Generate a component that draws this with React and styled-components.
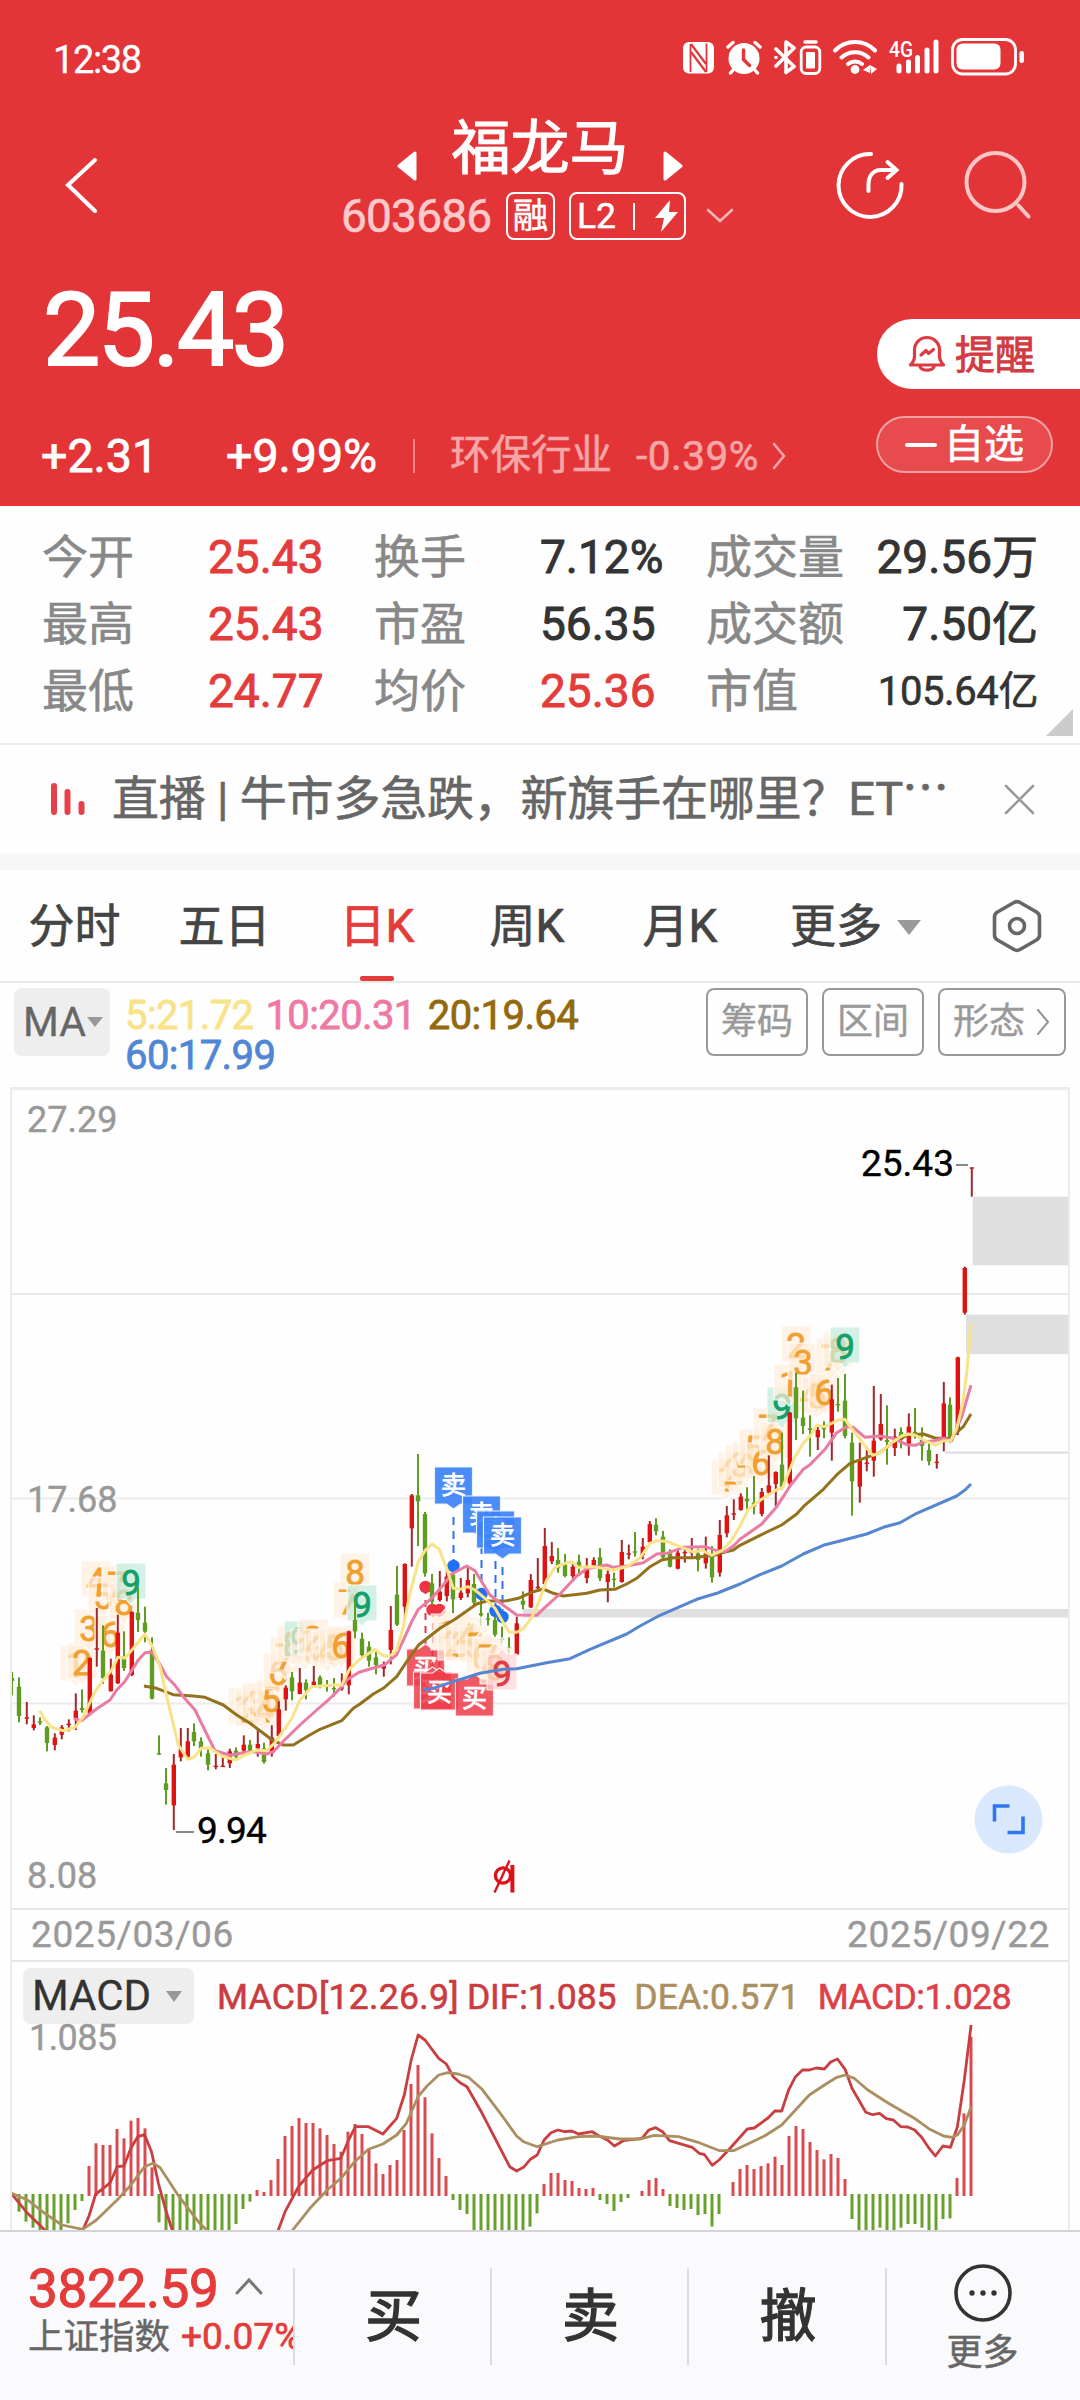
import React from "react";
import styled, { createGlobalStyle } from "styled-components";

const RED = "#e33538";
const UP = "#e43c3b";

const GlobalStyle = createGlobalStyle`
  * { box-sizing: border-box; }
  body { margin: 0; background: #fefefe; }
`;

const Screen = styled.main`
  width: 1080px;
  height: 2400px;
  display: flex;
  flex-direction: column;
  overflow: hidden;
  background: #fefefe;
  color: #333;
  font-family: Roboto, "Noto Sans CJK SC", sans-serif;
  white-space: nowrap;
  svg { display: block; flex: none; }
`;

/* ---------- header ---------- */
const Header = styled.header`
  height: 506px;
  background: ${RED};
  color: #fff;
`;
const StatusBar = styled.div`
  height: 115px;
  padding: 0 55px 0 53px;
  display: flex;
  align-items: center;
  justify-content: space-between;
`;
const Clock = styled.span`
  font-size: 38px;
  letter-spacing: -1.4px;
  padding-top: 4px;
  -webkit-text-stroke: 0.3px #fff;
`;
const StatusIcons = styled.div`
  display: flex;
  align-items: center;
`;
const Nav = styled.div`
  height: 135px;
  display: grid;
  grid-template-columns: 320px 440px 320px;
`;
const BackSlot = styled.div`
  padding: 42px 0 0 63px;
`;
const TitleRow = styled.div`
  height: 66px;
  display: flex;
  justify-content: center;
  align-items: flex-end;
  gap: 34px;
`;
const Title = styled.h1`
  margin: 0;
  align-self: flex-start;
  font-size: 59px;
  line-height: 67px;
  font-weight: 400;
  -webkit-text-stroke: 1.2px #fff;
`;
const CodeRow = styled.div`
  height: 48px;
  margin-top: 11px;
  display: flex;
  align-items: center;
  padding-left: 21px;
`;
const Code = styled.span`
  width: 165px;
  font-size: 46px;
  letter-spacing: -0.8px;
  color: #fdc9ca;
  -webkit-text-stroke: 0.6px #fdc9ca;
`;
const Badge = styled.span`
  height: 48px;
  width: ${(p) => p.$w}px;
  margin-right: ${(p) => p.$gap}px;
  border: 2px solid #fff;
  border-radius: 8px;
  display: flex;
  align-items: center;
  justify-content: center;
  font-size: 35.5px;
  line-height: 43px;
  -webkit-text-stroke: 0.5px #fff;
`;
const BadgeRule = styled.i`
  width: 2px;
  height: 27px;
  margin: 0 20px 0 17px;
  background: #fff;
`;
const NavActions = styled.div`
  display: flex;
  gap: 54px;
  padding: 34px 0 0 74px;
`;
const Quote = styled.div`
  height: 256px;
  display: flex;
  justify-content: space-between;
`;
const Price = styled.div`
  height: 156px;
  line-height: 160px;
  padding-left: 43px;
  font-size: 102px;
  font-weight: 400;
  letter-spacing: -2.5px;
  -webkit-text-stroke: 2px #fff;
`;
const ChangeRow = styled.div`
  height: 100px;
  display: flex;
  align-items: center;
  padding-left: 41px;
`;
const Change = styled.span`
  width: ${(p) => p.$w}px;
  font-size: 46.5px;
  -webkit-text-stroke: 0.8px #fff;
`;
const Sector = styled.div`
  display: flex;
  align-items: center;
  padding-left: 35px;
  border-left: 2px solid #ef8586;
  height: 34px;
  font-size: 40.5px;
  color: #f5a6a7;
  -webkit-text-stroke: 0.6px #f5a6a7;
`;
const SectorName = styled.span`
  margin: -9px 24px 0 0;
`;
const SectorChange = styled.span`
  margin-right: 12px;
  letter-spacing: 0.5px;
`;
const QuoteActions = styled.div`
  width: 204px;
  padding-top: 69px;
`;
const AlertButton = styled.button`
  width: 203px;
  margin-left: 1px;
  height: 70px;
  padding: 0 0 0 31px;
  border: 0;
  border-radius: 35px 0 0 35px;
  background: #fff;
  color: #d23b3f;
  font: 40px Roboto, "Noto Sans CJK SC", sans-serif;
  -webkit-text-stroke: 0.8px #d23b3f;
  display: flex;
  align-items: center;
  gap: 9px;
  span { margin-top: -5px; }
`;
const FavButton = styled.button`
  width: 177px;
  height: 57px;
  margin-top: 27px;
  padding: 0 0 8px 0;
  border: 2px solid #f2a0a1;
  border-radius: 29px;
  background: #e74b4d;
  color: #fff;
  font: 40px Roboto, "Noto Sans CJK SC", sans-serif;
  -webkit-text-stroke: 0.7px #fff;
  display: flex;
  align-items: center;
  justify-content: center;
  gap: 7px;
  i { width: 32px; height: 4px; margin-top: 9px; border-radius: 2px; background: #fff; }
`;

/* ---------- statistics ---------- */
const Stats = styled.section`
  height: 239px;
  border-bottom: 2px solid #ececec;
  position: relative;
  padding: 18px 42px 0;
`;
const StatGrid = styled.div`
  display: grid;
  grid-template-columns: 166px 166px 166px 166px 1fr;
  grid-auto-rows: 67px;
  align-items: center;
`;
const StatLabel = styled.span`
  font-size: 46px;
  line-height: 67px;
  color: #888;
  -webkit-text-stroke: 0.6px #888;
`;
const StatValue = styled.span`
  font-size: ${(p) => (p.$small ? 40 : 46)}px;
  line-height: 67px;
  letter-spacing: ${(p) => (p.$small ? -0.4 : 0)}px;
  color: ${(p) => (p.$up ? UP : "#333")};
  -webkit-text-stroke: ${(p) => (p.$small ? 0.6 : 0.9)}px currentColor;
`;
const LastCell = styled.div`
  display: flex;
  justify-content: space-between;
`;
const Fold = styled.i`
  position: absolute;
  right: 7px;
  bottom: 7px;
  border-style: solid;
  border-width: 0 0 27px 27px;
  border-color: transparent transparent #ccc transparent;
`;

/* ---------- news ---------- */
const News = styled.section`
  height: 108px;
  display: flex;
  align-items: center;
  padding: 0 45px 0 51px;
`;
const Headline = styled.div`
  flex: 1;
  margin-left: 27px;
  display: flex;
  font-size: 47px;
  line-height: 60px;
  letter-spacing: -0.2px;
  color: #666;
  -webkit-text-stroke: 0.6px #666;
`;
const Ellipsis = styled.span`
  margin: -14px 0 0 -1px;
  font-family: "Noto Sans CJK SC", sans-serif;
`;
const Band = styled.div`
  height: 17px;
  background: #f7f7f7;
`;

/* ---------- tabs ---------- */
const Tabs = styled.nav`
  height: 113px;
  border-bottom: 2px solid #e8e8e8;
  display: grid;
  grid-template-columns: 149px 151px 154px 146px 160px 232px 1fr;
  align-items: center;
`;
const Tab = styled.div`
  height: 111px;
  font-size: 46px;
  line-height: 112px;
  color: ${(p) => (p.$on ? UP : "#444")};
  -webkit-text-stroke: 0.7px currentColor;
  display: flex;
  flex-direction: column;
  align-items: center;
  &::after {
    content: "";
    margin-top: -6px;
    width: 34px;
    height: 5px;
    border-radius: 2px;
    background: ${(p) => (p.$on ? UP : "transparent")};
  }
`;
const MoreTab = styled.div`
  height: 111px;
  display: flex;
  align-items: center;
  padding-left: 30px;
  gap: 15px;
  font-size: 46px;
  line-height: 112px;
  color: #444;
  -webkit-text-stroke: 0.7px #444;
`;
const Caret = styled.i`
  width: 0;
  height: 0;
  border-style: solid;
  border-width: ${(p) => p.$h}px ${(p) => p.$w / 2}px 0;
  border-color: #999 transparent transparent;
  margin-top: ${(p) => p.$drop || 0}px;
`;

/* ---------- moving averages ---------- */
const MaRow = styled.section`
  height: 104px;
  display: flex;
  align-items: flex-start;
  padding: 5px 14px 0;
`;
const IndicatorChip = styled.div`
  display: flex;
  align-items: center;
  background: #eee;
  border-radius: 8px;
  width: ${(p) => p.$w}px;
  height: ${(p) => p.$h}px;
  padding-left: 9px;
  gap: ${(p) => p.$gap}px;
  font-size: ${(p) => p.$size}px;
  line-height: ${(p) => p.$h - 2}px;
  color: ${(p) => p.$color};
  -webkit-text-stroke: 0.3px currentColor;
`;
const MaValues = styled.div`
  width: 580px;
  margin-left: 15px;
  padding-top: 8px;
  display: flex;
  flex-wrap: wrap;
  column-gap: 12px;
`;
const MaValue = styled.span`
  font-size: 40px;
  line-height: 40px;
  letter-spacing: -0.6px;
  -webkit-text-stroke: 0.8px currentColor;
  color: ${(p) => p.$c};
`;
const ToolButton = styled.button`
  width: ${(p) => p.$w}px;
  height: 68px;
  margin-left: ${(p) => p.$ml || 0}px;
  padding: 0;
  border: 2px solid #999;
  border-radius: 8px;
  background: transparent;
  color: #999;
  font: 36px Roboto, "Noto Sans CJK SC", sans-serif;
  line-height: 60px;
  display: flex;
  align-items: center;
  justify-content: center;
  gap: 10px;
  -webkit-text-stroke: 0.4px #999;
`;

/* ---------- charts ---------- */
const ChartFrame = styled.section`
  width: 1060px;
  height: 1143px;
  margin-left: 10px;
  border: 2px solid #ececec;
  border-top-width: 3px;
  border-bottom: 0;
  overflow: hidden;
`;
const ChartSvg = styled.svg`
  width: 1056px;
  height: ${(p) => p.$h}px;
  overflow: visible;
  font-family: Roboto, "Noto Sans CJK SC", sans-serif;
`;
const Dates = styled.div`
  height: 54px;
  border-top: 2px solid #e6e6e6;
  border-bottom: 2px solid #e6e6e6;
  display: flex;
  align-items: center;
  justify-content: space-between;
  padding: 0 18px 1px 19px;
  font-size: 37px;
  letter-spacing: 0.6px;
  color: #999;
  -webkit-text-stroke: 0.4px #999;
`;
const MacdHead = styled.div`
  height: 62px;
  display: flex;
  align-items: flex-end;
  padding-left: 11px;
`;
const MacdText = styled.span`
  font-size: 35.5px;
  line-height: 54px;
  letter-spacing: ${(p) => p.$ls}px;
  margin-left: ${(p) => p.$ml}px;
  color: ${(p) => p.$c};
  -webkit-text-stroke: 0.6px currentColor;
`;

/* ---------- bottom bar ---------- */
const BottomBar = styled.footer`
  height: 170px;
  border-top: 2px solid #d4d4d6;
  background: #fafafc;
  display: grid;
  grid-template-columns: 295px 197px 197px 198px 193px;
  padding-top: 36px;
`;
const BarCell = styled.div`
  height: 97px;
  border-right: ${(p) => (p.$last ? 0 : 2)}px solid #dcdcde;
  overflow-x: ${(p) => (p.$last ? "visible" : "clip")};
  overflow-y: visible;
`;
const Action = styled(BarCell)`
  text-align: center;
  padding-left: 2px;
  font-size: 57px;
  line-height: 97px;
  -webkit-text-stroke: 1.3px #333;
`;
const IndexLine = styled.div`
  display: flex;
  align-items: center;
  height: 42px;
  padding-left: 28px;
  gap: 16px;
  font-size: 53px;
  letter-spacing: -0.3px;
  color: ${UP};
  -webkit-text-stroke: 1.1px ${UP};
  svg { margin-top: -6px; }
`;
const IndexName = styled.div`
  display: flex;
  align-items: center;
  height: 54px;
  padding-left: 28px;
  gap: 11px;
  font-size: 35.5px;
  line-height: 54px;
  color: #666;
  -webkit-text-stroke: 0.4px #666;
  span { color: ${UP}; font-size: 37px; -webkit-text-stroke: 0.7px ${UP}; }
`;
const MoreCell = styled(BarCell)`
  display: flex;
  flex-direction: column;
  align-items: center;
  padding-right: 2px;
  font-size: 36px;
  line-height: 60px;
  color: #666;
  -webkit-text-stroke: 0.5px #666;
  svg { margin-top: -5px; }
`;

/* ---------- data ---------- */
const xAt = (i) => 12 + 7 * i;

// Rows are [rising, high, low, body top, body bottom], thirds of a pixel below `base`.
const CANDLE_BLOCKS = [
  { base: 1500, rows: [
    [0,516,586,534,543],[0,532,667,560,648],[1,606,673,652,656],[1,646,691,673,684],[0,652,675,664,667],
    [0,678,754,682,729],[1,700,751,713,735],[1,675,718,682,704],[1,658,694,671,676],[1,580,690,632,658],
    [0,568,638,624,630],[1,472,640,474,640],[1,324,500,445,449],[0,376,552,452,534],[1,476,574,524,574],
    [1,344,552,398,550],[0,394,513,470,504],[1,334,528,336,525],[0,262,396,338,360],[0,320,427,368,395],
    [0,412,598,450,596],[0,706,764,760,764],[0,804,914,850,870],[1,762,990,794,916],[1,684,784,748,772],
    [1,684,774,724,770],[0,670,738,696,724],[0,712,770,724,745],[0,748,811,760,794],[1,762,808,797,801],
    [1,770,800,797,801],[1,746,804,754,790],[0,742,774,752,770],[1,706,758,734,752],[0,720,758,734,752],
    [1,690,770,732,745],[0,728,791,745,786],[1,676,770,712,760],[1,604,710,628,708],[1,556,632,563,598],
    [0,516,601,532,574],[1,504,583,548,582],[0,538,598,548,570],[1,498,560,545,556],[0,526,565,532,560],
    [0,540,575,555,559],[0,534,590,564,568],[1,520,572,562,566],[1,392,583,394,556],[0,300,415,360,394],
  ] },
  { base: 1420, rows: [
    [0,638,712,656,705],[0,664,740,680,722],[0,690,763,712,735],[1,725,770,738,746],[1,558,733,630,690],
    [0,438,618,524,614],[1,430,604,432,560],[1,222,440,226,325],[0,102,378,226,244],[0,276,470,282,460],
    [0,462,555,490,545],[1,453,545,515,540],[1,452,544,470,528],[0,440,580,464,538],[1,474,540,518,534],
    [1,442,532,480,520],[0,462,560,492,548],[0,510,620,580,586],[0,578,618,595,599],[0,588,654,600,644],
    [0,620,670,655,660],[0,652,710,682,686],[1,590,706,610,704],[0,514,568,542,554],[1,462,564,480,562],
    [1,414,508,500,504],[1,324,492,378,492],[1,366,432,408,424],[0,384,458,420,445],[0,402,472,430,468],
    [1,430,475,440,468],[0,404,468,425,442],[1,414,490,444,474],[1,412,444,420,436],[0,384,483,412,475],
    [1,444,547,462,486],[0,458,502,476,480],[1,360,488,396,486],[1,374,418,400,404],[0,336,410,394,398],
    [1,354,418,380,405],[1,303,372,312,366],[0,295,346,314,334],[0,333,422,350,412],[0,388,442,400,440],
    [1,390,448,398,446],[1,380,428,396,400],[1,354,410,395,399],[0,386,454,400,420],[1,350,446,400,430],
    [0,378,488,406,472],[1,300,470,345,458],
  ] },
  { base: 1120, rows: [
    [1,1158,1252,1186,1240],[1,1138,1200,1180,1184],[1,1120,1172,1130,1170],[0,1102,1168,1136,1144],
    [0,1068,1183,1148,1160],[1,1104,1189,1116,1182],[1,1006,1128,1096,1118],[1,1054,1158,1056,1092],
    [0,938,1108,1034,1104],[1,876,1104,878,1090],[0,758,960,802,895],[0,812,942,893,918],[0,886,1010,925,930],
    [1,918,990,930,952],[0,904,955,918,928],[1,794,1022,838,938],[0,774,875,852,856],[0,762,955,842,948],
    [0,938,1187,968,1084],[1,968,1148,1020,1100],[1,980,1054,1028,1032],[1,798,1070,962,1022],[1,822,962,912,958],
    [0,856,1034,960,966],[1,926,1008,950,984],[0,922,985,936,960],[1,880,1007,920,972],[0,864,956,935,945],
    [0,922,1022,958,978],[0,968,1036,990,1024],[1,1002,1046,1025,1029],[1,786,994,850,962],[0,832,968,854,950],
    [1,710,945,712,930],[1,440,584,444,578],[1,142,230,142,145],
  ] },
];
const CANDLES = CANDLE_BLOCKS.flatMap(({ base, rows }) =>
  rows.map(([up, ...ys]) => [up, ...ys.map((v) => base + v / 3)])
);

// Line points, thirds of a pixel from each block's origin.
const ORIGINS = [[0, 1500], [360, 1420], [680, 1120]];
const toPoints = (blocks) =>
  blocks
    .flatMap((pts, b) => pts.map(([x, y]) => `${(ORIGINS[b][0] + x / 3).toFixed(1)},${(ORIGINS[b][1] + y / 3).toFixed(1)}`))
    .join(" ");

const AVERAGES = [
  { color: "#5586cf", blocks: [[],
    [[190,810],[220,805],[270,788],[360,760],[430,748],[470,746],[560,728],[630,716],[690,688],[800,642],[840,618],[900,586],[960,560],[1010,538],[1070,520]],
    [[120,1416],[180,1392],[240,1364],[305,1338],[370,1302],[430,1276],[500,1258],[560,1242],[610,1222],[660,1208],[710,1180],[830,1128],[855,1110],[873,1092]]] },
  { color: "#94711c", blocks: [
    [[432,558],[470,565],[520,584],[580,588],[615,592],[670,615],[710,645],[750,670],[780,692],[820,722],[850,735],[880,735],[920,710],[960,688],[1025,662],[1060,625]],
    [[0,852],[40,822],[70,805],[110,770],[140,725],[175,676],[240,625],[285,598],[350,552],[380,543],[440,542],[475,535],[520,515],[550,507],[580,520],[610,528],[680,520],[720,510],[765,508],[800,492],[830,475],[870,440],[905,420],[940,413],[1000,413],[1070,404]],
    [[120,1300],[160,1290],[180,1276],[240,1246],[305,1215],[350,1182],[370,1160],[430,1108],[475,1060],[510,1030],[560,1012],[600,998],[640,966],[685,945],[730,942],[765,954],[810,955],[850,920],[873,882]]] },
  { color: "#ea7ba3", blocks: [
    [[222,656],[245,662],[285,630],[330,600],[350,570],[375,544],[415,480],[435,458],[455,456],[478,490],[500,530],[525,556],[550,590],[585,630],[620,702],[645,752],[690,766],[730,758],[760,755],[800,762],[820,755],[850,724],[900,675],[950,630],[985,600],[1020,566],[1040,540],[1075,518]],
    [[0,756],[40,744],[75,734],[110,704],[135,650],[155,605],[175,568],[215,535],[250,495],[275,462],[320,438],[345,452],[365,485],[390,525],[430,556],[470,585],[530,586],[555,562],[600,522],[650,468],[680,446],[740,435],[760,442],[800,438],[850,428],[890,402],[920,400],[970,382],[1030,380]],
    [[75,1280],[110,1292],[135,1295],[160,1278],[180,1258],[245,1212],[290,1160],[310,1130],[330,1098],[370,1048],[390,1034],[435,988],[470,938],[500,920],[520,922],[555,952],[600,948],[640,955],[680,974],[705,976],[735,965],[765,962],[790,955],[815,962],[845,890],[873,796]]] },
  { color: "#f8e388", blocks: [
    [[119,632],[135,660],[155,682],[190,692],[225,682],[250,650],[285,575],[310,540],[335,510],[353,472],[375,474],[400,445],[435,402],[458,440],[480,500],[500,590],[535,735],[563,778],[582,772],[605,744],[630,744],[665,768],[707,780],[735,765],[770,750],[800,752],[825,728],[875,656],[900,600],[935,560],[1000,555],[1025,555],[1050,505],[1075,482]],
    [[0,718],[45,688],[70,708],[90,708],[110,690],[130,620],[150,520],[175,425],[195,392],[216,372],[238,388],[258,440],[280,505],[300,508],[323,500],[345,510],[375,535],[405,565],[425,600],[447,636],[470,637],[490,626],[515,592],[535,550],[560,480],[585,442],[610,432],[635,425],[655,442],[700,440],[760,450],[800,440],[840,414],[870,370],[890,362],[920,364],[960,380],[1000,396],[1030,390]],
    [[75,1296],[95,1306],[125,1292],[155,1260],[180,1218],[205,1168],[245,1138],[285,1112],[308,1102],[325,1060],[345,1010],[370,970],[395,942],[410,916],[435,920],[475,900],[495,898],[515,926],[545,964],[560,985],[578,1006],[600,998],[640,965],[665,948],[685,942],[705,945],[735,962],[768,976],[790,962],[812,962],[830,925],[848,850],[860,760],[873,612]]] },
];

// Countdown runs: first candle index and the top of each successive tag.
const RUNS = [
  { start: 9, tops: [1645, 1643, 1609, 1561, 1577, 1615, 1565, 1583, 1563] },
  { start: 33, tops: [1688, 1690, 1683, 1690, 1680, 1653, 1637, 1625, 1621] },
  { start: 42, tops: [1629, 1619, 1629, 1631, 1628, 1626, 1582, 1553, 1585] },
  { start: 102, tops: [1459, 1452, 1445, 1441, 1429, 1443, 1408, 1422, 1387] },
  { start: 111, tops: [1364, 1326, 1343, 1375, 1377, 1373, 1338, 1331, 1327] },
];
const LOW_RUN = { start: 62, tops: [1614, 1624, 1625, 1617, 1626, 1637, 1638, 1648, 1654] };

const SELLS = [[453.5, 1467, 1566], [481.5, 1496, 1594], [495.5, 1511, 1611], [502.5, 1517, 1617]];
const BUYS = [[425.5, 1649, 1587], [432.5, 1672, 1610], [439.5, 1673, 1610], [474.5, 1679, 0]];

// Histogram ends, thirds of a pixel below 1880; values over 945 fall under the zero line.
const MACD_BARS = [
  948,995,1025,1043,1060,1060,1060,1060,1030,990,963,858,790,795,795,747,775,722,714,745,862,1027,
  1060,1060,1060,1060,1060,1060,1060,1060,1060,1060,1032,987,965,930,936,900,837,768,738,714,729,729,745,765,
  792,815,755,732,762,808,850,882,855,840,750,612,555,652,760,834,888,960,990,1002,1060,1060,1060,1060,1060,
  1060,1060,1060,1040,1000,912,879,879,900,903,924,927,924,960,972,993,966,954,945,933,900,894,927,978,984,990,
  987,1005,1002,1040,1002,945,906,867,855,867,858,850,830,855,768,738,747,786,810,838,822,834,897,1017,1060,1060,
  1060,1043,1060,1060,1043,1032,1032,1043,1060,1060,1017,1015,894,700,470,
];
const macdPoints = (pts) => pts.map(([x, y]) => `${(x / 1.4519).toFixed(1)},${(1880 + y / 3).toFixed(1)}`).join(" ");
const DIF = [[17,942],[40,1000],[65,1050],[95,1100],[120,1050],[129,1010],[139,942],[149,927],[160,908],[170,860],[180,858],[190,804],[200,770],[210,764],[220,815],[230,910],[242,1000],[250,1050],[300,1300],[360,1300],[404,1050],[414,995],[434,918],[454,870],[475,842],[495,835],[505,785],[516,740],[535,740],[556,762],[576,715],[587,645],[597,540],[607,465],[617,480],[637,535],[648,552],[658,590],[668,608],[678,620],[700,700],[720,780],[740,860],[750,873],[760,862],[770,838],[780,825],[790,780],[800,758],[810,750],[820,755],[830,753],[840,762],[860,755],[870,768],[882,780],[892,798],[905,782],[932,775],[942,750],[952,743],[962,755],[972,782],[1005,802],[1015,820],[1023,824],[1034,856],[1044,840],[1060,805],[1085,747],[1095,744],[1115,714],[1125,693],[1135,693],[1145,630],[1155,590],[1165,570],[1175,570],[1185,564],[1197,567],[1206,546],[1216,537],[1227,568],[1237,625],[1257,697],[1267,704],[1277,700],[1287,716],[1297,720],[1308,740],[1318,741],[1328,750],[1338,772],[1348,802],[1358,828],[1369,798],[1380,802],[1390,740],[1400,600],[1410,435]];
const DEA = [[17,940],[40,960],[65,1000],[90,1035],[120,1048],[140,1020],[170,960],[190,915],[210,860],[222,850],[232,862],[260,950],[290,1030],[300,1050],[340,1200],[380,1200],[425,1050],[450,985],[475,930],[495,895],[515,845],[535,808],[556,792],[576,765],[590,730],[607,650],[620,618],[637,585],[650,578],[665,582],[680,592],[700,628],[730,710],[750,768],[760,785],[780,800],[810,780],[840,770],[865,768],[900,777],[930,777],[950,766],[985,770],[1015,788],[1045,812],[1065,812],[1085,793],[1110,768],[1135,735],[1175,645],[1197,615],[1215,592],[1227,585],[1240,595],[1260,630],[1290,670],[1330,718],[1350,748],[1370,768],[1382,772],[1390,765],[1400,735],[1410,680]];

const STATS = [
  ["今开", "25.43", "换手", "7.12%", "成交量", "29.56万"],
  ["最高", "25.43", "市盈", "56.35", "成交额", "7.50亿"],
  ["最低", "24.77", "均价", "25.36", "市值", "105.64亿"],
];

/* ---------- chart parts ---------- */
const TAG_TONES = {
  count: ["#ffeddd", "#f0a030"],
  top: ["#c4ecdc", "#14a06a"],
  low: ["#ffd5d8", "#e03a44"],
};
function CountTag({ x, top, n, tone, up }) {
  const [fill, ink] = TAG_TONES[tone];
  const shape = up
    ? `M${x - 15} ${top}h10l5 -6l5 6h10v36h-30z`
    : `M${x - 15} ${top}h30v36h-10l-5 6l-5 -6h-10z`;
  return (
    <g>
      <path d={shape} fill={fill} fillOpacity=".72" stroke="#fff" strokeOpacity=".85" strokeWidth="1.2" strokeLinejoin="round" />
      <text x={x} y={top + 31.5} fontSize="35" textAnchor="middle" fill={ink} stroke={ink} strokeWidth=".8">{n}</text>
    </g>
  );
}
function CountRun({ start, tops, low }) {
  return tops.map((top, k) => (
    <CountTag key={k} x={xAt(start + k)} top={top} n={k + 1} up={low} tone={k < 8 ? "count" : low ? "low" : "top"} />
  ));
}
function Sell({ x, top, dot }) {
  return (
    <g>
      <path d={`M${x} ${top + 50}V${dot}`} stroke="#2b74e8" strokeWidth="2" strokeDasharray="8 6" />
      <circle cx={x} cy={dot} r="6.2" fill="#1f70f2" />
      <path d={`M${x - 19} ${top}h38v37h-12l-7 5l-7 -5h-12z`} fill="#3d83f7" fillOpacity=".93" stroke="#e8f1ff" strokeWidth="1.2" />
      <text x={x} y={top + 27} fontSize="25" textAnchor="middle" fill="#fff" stroke="#fff" strokeWidth=".8">卖</text>
    </g>
  );
}
function Buy({ x, top, dot }) {
  return (
    <g>
      {dot > 0 && <path d={`M${x} ${dot}V${top - 4}`} stroke="#e03a48" strokeWidth="2" strokeDasharray="7 6" />}
      {dot > 0 && <circle cx={x} cy={dot} r="6.2" fill="#ef3340" />}
      <path d={`M${x - 19} ${top}h12l7 -5l7 5h12v37h-38z`} fill="#ee3d4b" fillOpacity=".86" stroke="#ffe8ea" strokeWidth="1.2" />
      <text x={x} y={top + 28} fontSize="25" textAnchor="middle" fill="#fff" stroke="#fff" strokeWidth=".8">买</text>
    </g>
  );
}
function Candle({ i, c: [up, hi, lo, top, bottom] }) {
  const x = xAt(i) + (up ? 0.8 : 0);
  return (
    <g>
      <rect x={x - 1} y={hi} width="2" height={lo - hi} fill={up ? "#a3282b" : "#5f9d22"} />
      <rect x={x - 2.2} y={top} width="4.4" height={Math.max(1.4, bottom - top)} fill={up ? "#e01212" : "#5f9d22"} />
    </g>
  );
}
function PriceChart() {
  return (
    <ChartSvg $h={818} viewBox="12 1090 1056 818">
      {[1294, 1498.5, 1703.5].map((y) => (
        <rect key={y} x="12" y={y - 1} width="1056" height="2" fill="#ebebeb" />
      ))}
      <g fill="#dfdfdf">
        <rect x="972.7" y="1196.7" width="97.3" height="68.6" />
        <rect x="966" y="1314.7" width="104" height="39.5" />
        <rect x="945" y="1451.5" width="125" height="2.2" />
        <rect x="523" y="1609" width="547" height="8.6" />
      </g>
      {BUYS.map(([x, top, dot]) => <Buy key={x} x={x} top={top} dot={dot} />)}
      {RUNS.map((r) => <CountRun key={r.start} {...r} />)}
      {CANDLES.map((c, i) => <Candle key={i} i={i} c={c} />)}
      <CountRun {...LOW_RUN} low />
      {SELLS.map(([x, top, dot]) => <Sell key={x} x={x} top={top} dot={dot} />)}
      {AVERAGES.map((a) => (
        <polyline key={a.color} points={toPoints(a.blocks)} fill="none" stroke={a.color} strokeWidth="3" strokeLinejoin="round" />
      ))}
      <g fontSize="36" fill="#999" stroke="#999" strokeWidth=".4">
        <text x="27" y="1132">27.29</text>
        <text x="27" y="1512">17.68</text>
        <text x="27" y="1888">8.08</text>
      </g>
      <g fontSize="37" fill="#000" stroke="#000" strokeWidth=".4">
        <text x="861" y="1176">25.43</text>
        <text x="197" y="1843" letterSpacing="-.8">9.94</text>
      </g>
      <path d="M956 1165h12M176 1832h18" stroke="#888" strokeWidth="1.8" />
      <g fill="none" stroke="#dc1218" strokeWidth="3.4">
        <circle cx="503" cy="1875.5" r="7.6" />
        <path d="M512.4 1865v27.5" strokeWidth="4" />
        <path d="M494.5 1892.5l15 -32" strokeWidth="2.4" />
      </g>
      <circle cx="1008.5" cy="1819.5" r="34" fill="#dae8fd" />
      <path d="M994.5 1821.500v-15.500h15M1023 1816.500v16h-15.500" fill="none" stroke="#2f77ee" strokeWidth="3.6" />
    </ChartSvg>
  );
}
function MacdChart() {
  return (
    <ChartSvg $h={206} viewBox="12 2024 1056 206">
      <text x="29" y="2050" fontSize="36" fill="#999" stroke="#999" strokeWidth=".4" letterSpacing="-.6">1.085</text>
      {MACD_BARS.map((v, i) => {
        if (v === 945) return null;
        const y = 1880 + v / 3;
        const up = v < 945;
        return (
          <rect key={i} x={xAt(i) - 1.5} y={up ? y : 2194} width="3" height={up ? 2196 - y : y - 2194} fill={up ? "#d94b50" : "#68a02c"} />
        );
      })}
      <polyline points={macdPoints(DIF)} fill="none" stroke="#c93f41" strokeWidth="2.8" strokeLinejoin="round" />
      <polyline points={macdPoints(DEA)} fill="none" stroke="#ab8f60" strokeWidth="2.8" strokeLinejoin="round" />
    </ChartSvg>
  );
}

/* ---------- icons ---------- */
function StatusGlyphs() {
  return (
    <StatusIcons>
      <svg width="43" height="40" viewBox="683 38 43 40" fill="none">
        <rect x="683" y="42" width="31" height="31.5" rx="6" fill="#fff" />
        <path d="M690.5 72V44M706.5 43.500V72" stroke={RED} strokeWidth="1.8" />
        <path d="M691 44l15 20M691 52l15 20" stroke={RED} strokeWidth="2.2" />
      </svg>
      <svg width="48" height="40" viewBox="726 38 48 40" fill="none" stroke="#fff" strokeLinecap="round">
        <circle cx="744" cy="58.5" r="15.5" fill="#fff" stroke="none" />
        <path d="M728 47l5 -4.500M760 47l-5 -4.500M734 69l-3.500 4M754 69l3.500 4" strokeWidth="3.4" />
        <path d="M743.5 50v9.500l6 6" stroke={RED} strokeWidth="3.4" />
      </svg>
      <svg width="59" height="40" viewBox="774 38 59 40" fill="none" stroke="#fff">
        <path d="M776 49l18 17.500l-8 6V42l8 6L776 66" strokeWidth="3.6" strokeLinejoin="round" strokeLinecap="round" />
        <path d="M776 56v3" strokeWidth="3" />
        <path d="M805 42h11" strokeWidth="3.4" strokeLinecap="round" />
        <rect x="801.2" y="47" width="18.6" height="26.5" rx="5" strokeWidth="2.8" />
        <rect x="806" y="52" width="9" height="16.5" rx="1" fill="#fff" stroke="none" />
      </svg>
      <svg width="55" height="40" viewBox="833 38 55 40" fill="none" stroke="#fff" strokeWidth="4" strokeLinecap="round">
        <path d="M835 50.500a28 28 0 0 1 40 0M841.500 57.500a20 20 0 0 1 27 0M848 64a11 11 0 0 1 14 0" />
        <circle cx="855" cy="69.5" r="4.4" fill="#fff" stroke="none" />
        <path d="M863 70l7 -5v8zM870 65l7 4l-6 5z" fill="#fff" stroke="none" />
      </svg>
      <svg width="63" height="40" viewBox="888 38 63 40">
        <text x="889" y="56.5" fontSize="22" fontWeight="500" fill="#fff" textLength="24" lengthAdjust="spacingAndGlyphs">4G</text>
        <path d="M899 66v5M908.500 62v9M917.500 57.500v13.500M927 50v21M936 42v29" stroke="#fff" strokeWidth="5" strokeLinecap="round" />
      </svg>
      <svg width="74" height="40" viewBox="951 38 74 40" fill="none">
        <rect x="952.5" y="39.5" width="63" height="34.5" rx="10" stroke="#fff" strokeWidth="2.8" />
        <rect x="956.5" y="43.5" width="44" height="26" rx="6" fill="#fff" />
        <rect x="1019.5" y="51" width="4.4" height="12" rx="2" fill="#fff" />
      </svg>
    </StatusIcons>
  );
}
const Chevron = ({ w, h, d, color, sw = 2.6 }) => (
  <svg width={w} height={h} viewBox={`0 0 ${w} ${h}`} fill="none" stroke={color} strokeWidth={sw} strokeLinecap="round">
    <path d={d} />
  </svg>
);

export default function App() {
  return (
    <Screen>
      <GlobalStyle />
      <Header>
        <StatusBar>
          <Clock>12:38</Clock>
          <StatusGlyphs />
        </StatusBar>
        <Nav>
          <BackSlot>
            <Chevron w={36} h={56} d="M32 3L5 28L32 54" color="#fff" sw={4} />
          </BackSlot>
          <div>
            <TitleRow>
              <svg width="20" height="30" viewBox="0 0 20 30"><path d="M18 2L2 15L18 28z" fill="#fff" stroke="#fff" strokeWidth="3" strokeLinejoin="round" /></svg>
              <Title>福龙马</Title>
              <svg width="20" height="30" viewBox="0 0 20 30"><path d="M2 2L18 15L2 28z" fill="#fff" stroke="#fff" strokeWidth="3" strokeLinejoin="round" /></svg>
            </TitleRow>
            <CodeRow>
              <Code>603686</Code>
              <Badge $w={49} $gap={14}>融</Badge>
              <Badge $w={117} $gap={19}>
                L2
                <BadgeRule />
                <svg width="23" height="32" viewBox="0 0 23 32"><path d="M15 0L0 18h9L6 32L23 12h-9z" fill="#fff" /></svg>
              </Badge>
              <Chevron w={30} h={16} d="M3 2L15 13L27 2" color="#f9b5b6" />
            </CodeRow>
          </div>
          <NavActions>
            <svg width="72" height="72" viewBox="834 149 72 72" fill="none" stroke="#fff" strokeWidth="4" strokeLinecap="round">
              <path d="M871 154A31.500 31.500 0 1 0 901.500 184" />
              <path d="M868.500 191v-7c0-8 5-14 12-14h15M887.500 162l9 8l-9 8" />
            </svg>
            <svg width="72" height="72" viewBox="960 149 72 72" fill="none" stroke="#fcc5c6" strokeWidth="4" strokeLinecap="round">
              <circle cx="995.5" cy="182" r="29" />
              <path d="M1018.500 205.500l10 11" />
            </svg>
          </NavActions>
        </Nav>
        <Quote>
          <div>
            <Price>25.43</Price>
            <ChangeRow>
              <Change $w={185}>+2.31</Change>
              <Change $w={187}>+9.99%</Change>
              <Sector>
                <SectorName>环保行业</SectorName>
                <SectorChange>-0.39%</SectorChange>
                <Chevron w={16} h={30} d="M3 3L13 15L3 27" color="#f5a6a7" />
              </Sector>
            </ChangeRow>
          </div>
          <QuoteActions>
            <AlertButton>
              <svg width="38" height="40" viewBox="0 0 38 40" fill="none" stroke="#dc3b44" strokeWidth="3.2" strokeLinecap="round" strokeLinejoin="round">
                <path d="M2.500 31h33c-3-3-4-5-4-9v-6a12.500 12.500 0 0 0-25 0v6c0 4-1 6-4 9zM12 33a7.500 5 0 0 0 14 0" />
                <path d="M13 21l5-4.500l2.500 3l5-4" />
              </svg>
              <span>提醒</span>
            </AlertButton>
            <FavButton><i />自选</FavButton>
          </QuoteActions>
        </Quote>
      </Header>

      <Stats>
        <StatGrid>
          {STATS.map(([a, av, b, bv, c, cv]) => (
            <React.Fragment key={a}>
              <StatLabel>{a}</StatLabel>
              <StatValue $up>{av}</StatValue>
              <StatLabel>{b}</StatLabel>
              <StatValue $up={b === "均价"}>{bv}</StatValue>
              <LastCell>
                <StatLabel>{c}</StatLabel>
                <StatValue $small={c === "市值"}>{cv}</StatValue>
              </LastCell>
            </React.Fragment>
          ))}
        </StatGrid>
        <Fold />
      </Stats>

      <News>
        <svg width="34" height="32" viewBox="0 0 34 32" stroke="#e8404a" strokeWidth="6" strokeLinecap="round">
          <path d="M3 3v26M16.500 9v20M30.500 21v8" />
        </svg>
        <Headline>直播 | 牛市多急跌，新旗手在哪里？ET<Ellipsis>…</Ellipsis></Headline>
        <svg width="31" height="31" viewBox="0 0 31 31" stroke="#999" strokeWidth="2.6" strokeLinecap="round">
          <path d="M2 2l27 27M29 2L2 29" />
        </svg>
      </News>
      <Band />

      <Tabs>
        {["分时", "五日", "日K", "周K", "月K"].map((t) => (
          <Tab key={t} $on={t === "日K"}>{t}</Tab>
        ))}
        <MoreTab>更多<Caret $w={24} $h={15} $drop={4} /></MoreTab>
        <svg width="50" height="54" viewBox="0 0 50 54" fill="none" stroke="#666" strokeWidth="3.6" strokeLinejoin="round">
          <path d="M22 3.500q3-1.700 6 0l16.500 9.500q3 1.700 3 5v18q0 3.300-3 5l-16.500 9.500q-3 1.700-6 0l-16.500-9.500q-3-1.700-3-5v-18q0-3.300 3-5z" />
          <circle cx="25" cy="27" r="7.5" />
        </svg>
      </Tabs>

      <MaRow>
        <IndicatorChip $w={96} $h={68} $gap={1} $size={41} $color="#666">MA<Caret $w={16} $h={10} /></IndicatorChip>
        <MaValues>
          <MaValue $c="#f8e388">5:21.72</MaValue>
          <MaValue $c="#ee7aa4">10:20.31</MaValue>
          <MaValue $c="#94690c">20:19.64</MaValue>
          <MaValue $c="#5086d6">60:17.99</MaValue>
        </MaValues>
        <ToolButton $w={102} $ml={1}>筹码</ToolButton>
        <ToolButton $w={102} $ml={14}>区间</ToolButton>
        <ToolButton $w={128} $ml={14}>
          形态
          <Chevron w={16} h={28} d="M3 2L13 14L3 26" color="#999" sw={2.2} />
        </ToolButton>
      </MaRow>

      <ChartFrame>
        <PriceChart />
        <Dates><span>2025/03/06</span><span>2025/09/22</span></Dates>
        <MacdHead>
          <IndicatorChip $w={171} $h={56} $gap={15} $size={42} $color="#333">MACD<Caret $w={16} $h={11} /></IndicatorChip>
          <MacdText $ml={23} $ls={0.3} $c="#cb3b40">MACD[12.26.9]</MacdText>
          <MacdText $ml={8} $ls={-0.1} $c="#cb3b40">DIF:1.085</MacdText>
          <MacdText $ml={18} $ls={0.1} $c="#ab8f60">DEA:0.571</MacdText>
          <MacdText $ml={18} $ls={-0.5} $c="#dd4048">MACD:1.028</MacdText>
        </MacdHead>
        <MacdChart />
      </ChartFrame>

      <BottomBar>
        <BarCell>
          <IndexLine>
            3822.59
            <Chevron w={28} h={18} d="M2 16L14 3L26 16" color="#777" sw={3} />
          </IndexLine>
          <IndexName>上证指数<span>+0.07%</span></IndexName>
        </BarCell>
        <Action>买</Action>
        <Action>卖</Action>
        <Action>撤</Action>
        <MoreCell $last>
          <svg width="60" height="60" viewBox="0 0 60 60" fill="none">
            <circle cx="30" cy="30" r="27" stroke="#333" strokeWidth="3.6" />
            <g fill="#333"><circle cx="19" cy="30" r="2.7" /><circle cx="30" cy="30" r="2.7" /><circle cx="41" cy="30" r="2.7" /></g>
          </svg>
          更多
        </MoreCell>
      </BottomBar>
    </Screen>
  );
}
